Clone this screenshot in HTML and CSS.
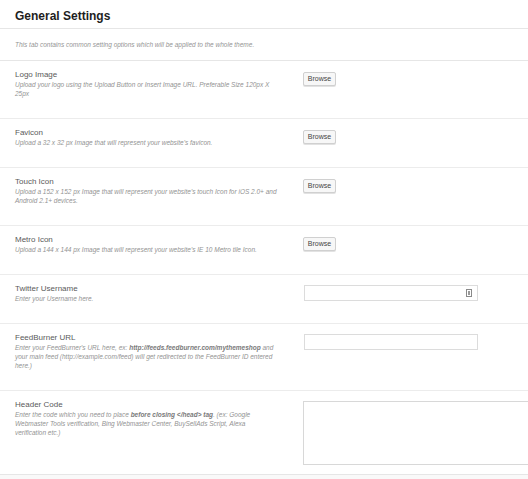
FILE: index.html
```html
<!DOCTYPE html>
<html>
<head>
<meta charset="utf-8">
<link rel="stylesheet" href="styles.css">
</head>
<body>
<div class="page">
  <h2 class="title">General Settings</h2>
  <div class="intro">This tab contains common setting options which will be applied to the whole theme.</div>

  <div class="row">
    <div class="info">
      <div class="label">Logo Image</div>
      <div class="desc">Upload your logo using the Upload Button or Insert Image URL. Preferable Size 120px X 25px</div>
    </div>
    <div class="control"><button class="browse">Browse</button></div>
  </div>

  <div class="row">
    <div class="info">
      <div class="label">Favicon</div>
      <div class="desc">Upload a 32 x 32 px Image that will represent your website's favicon.</div>
    </div>
    <div class="control"><button class="browse">Browse</button></div>
  </div>

  <div class="row">
    <div class="info">
      <div class="label">Touch Icon</div>
      <div class="desc">Upload a 152 x 152 px Image that will represent your website's touch Icon for iOS 2.0+ and Android 2.1+ devices.</div>
    </div>
    <div class="control"><button class="browse">Browse</button></div>
  </div>

  <div class="row">
    <div class="info">
      <div class="label">Metro Icon</div>
      <div class="desc">Upload a 144 x 144 px Image that will represent your website's IE 10 Metro tile Icon.</div>
    </div>
    <div class="control"><button class="browse">Browse</button></div>
  </div>

  <div class="row">
    <div class="info">
      <div class="label">Twitter Username</div>
      <div class="desc">Enter your Username here.</div>
    </div>
    <div class="control">
      <div class="input">
        <svg class="key" width="6" height="8" viewBox="0 0 6 8"><rect x="0.5" y="0.5" width="5" height="7" fill="#fff" stroke="#8a8a8a"/><rect x="2" y="2" width="2" height="4" fill="#9a9a9a"/></svg>
      </div>
    </div>
  </div>

  <div class="row">
    <div class="info">
      <div class="label">FeedBurner URL</div>
      <div class="desc">Enter your FeedBurner's URL here, ex: <b>http://feeds.feedburner.com/mythemeshop</b> and your main feed (http://example.com/feed) will get redirected to the FeedBurner ID entered here.)</div>
    </div>
    <div class="control"><div class="input"></div></div>
  </div>

  <div class="row">
    <div class="info">
      <div class="label">Header Code</div>
      <div class="desc">Enter the code which you need to place <b>before closing &lt;/head&gt; tag</b>. (ex: Google Webmaster Tools verification, Bing Webmaster Center, BuySellAds Script, Alexa verification etc.)</div>
    </div>
    <div class="control"><div class="textarea"></div></div>
  </div>
</div>
</body>
</html>
```

FILE: styles.css
```css
html, body {
  margin: 0;
  padding: 0;
}
body {
  background: #f9f9f9;
  font-family: "Liberation Sans", Arial, sans-serif;
  overflow: hidden;
}
.page {
  background: #fff;
  width: 528px;
  overflow: hidden;
  border-bottom: 1px solid #e6e6e6;
}
.title {
  margin: 0;
  padding: 9px 0 5px 15px;
  font-size: 12px;
  line-height: 14px;
  font-weight: bold;
  color: #1e1e1e;
  border-bottom: 1px solid #e6e6e6;
}
.intro {
  padding: 11px 0 11px 15px;
  font-size: 6.5px;
  line-height: 9px;
  font-style: italic;
  color: #959595;
  border-bottom: 1px solid #e6e6e6;
}
.row {
  display: grid;
  grid-template-columns: 262px 1fr;
  column-gap: 26px;
  padding: 9px 0 0 15px;
  border-bottom: 1px solid #ececec;
}
.row:last-child {
  border-bottom: none;
}
.info {
  padding-bottom: 20px;
}
.label {
  font-size: 8px;
  line-height: 10px;
  color: #5a5a5a;
}
.desc {
  font-size: 6.5px;
  line-height: 9px;
  font-style: italic;
  color: #939393;
}
.desc b {
  font-weight: bold;
  color: #7a7a7a;
}
.control {
  padding-bottom: 9px;
}
.browse {
  display: block;
  margin-top: 2px;
  width: 33px;
  height: 14px;
  padding: 0;
  border: 1px solid #d0d0d0;
  border-radius: 2px;
  background: #f7f7f7;
  box-shadow: 0 1px 0 #e2e2e2;
  font-family: "Liberation Sans", Arial, sans-serif;
  font-size: 7px;
  line-height: 12px;
  color: #444;
  text-align: center;
}
.input {
  position: relative;
  margin-top: 1px;
  margin-left: 1px;
  width: 174px;
  height: 16px;
  box-sizing: border-box;
  border: 1px solid #dcdcdc;
  background: #fff;
}
.key {
  position: absolute;
  right: 5px;
  top: 3px;
}
.textarea {
  margin-top: 1px;
  width: 300px;
  height: 64px;
  box-sizing: border-box;
  border: 1px solid #d8d8d8;
  background: #fff;
}
```
